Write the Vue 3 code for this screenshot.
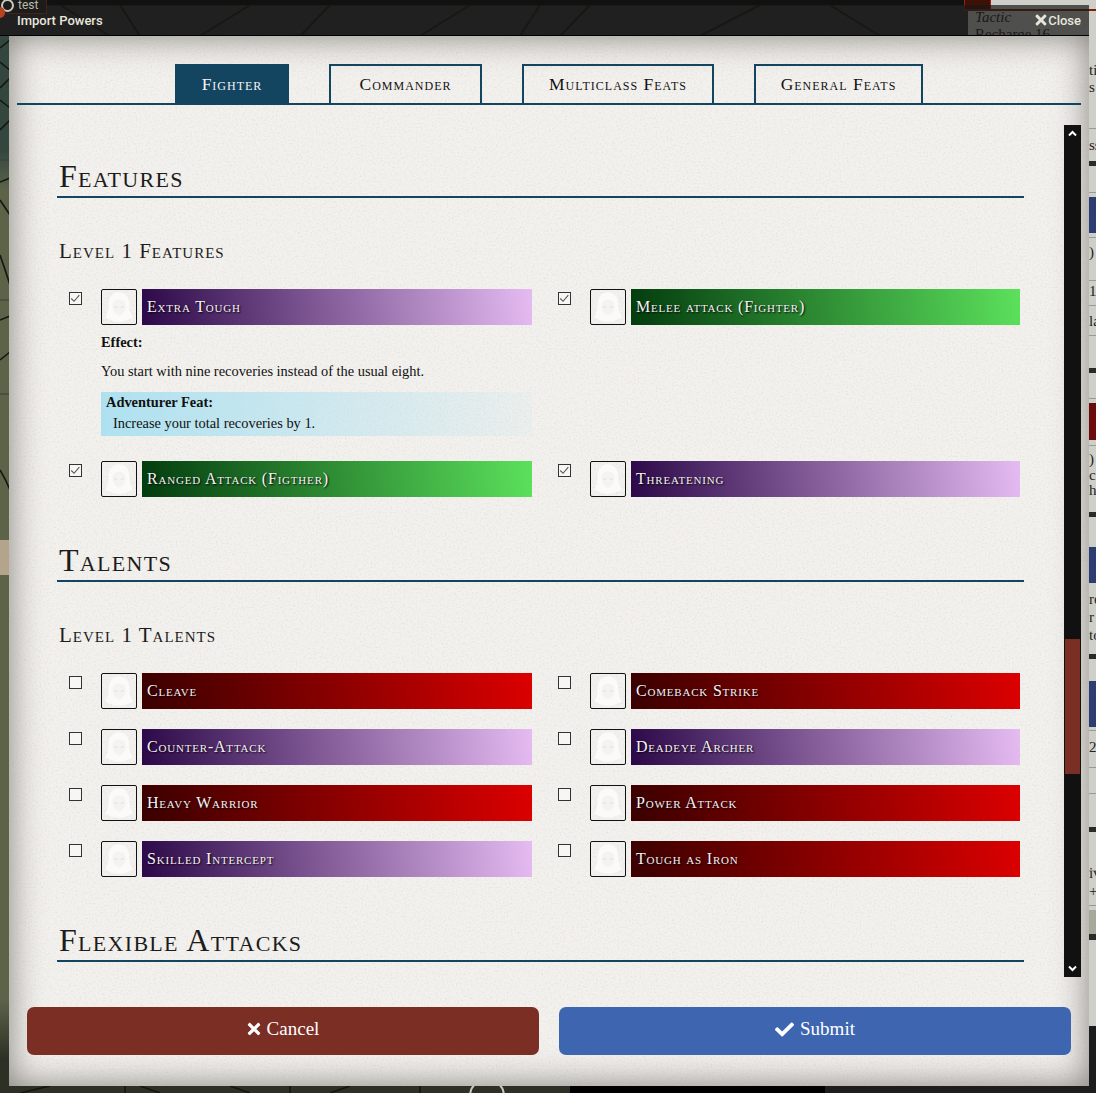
<template>
  <div class="desktop">
    <!-- whatever sits behind the dialog -->
    <div class="backdrop-top"></div>
    <svg class="map" width="1096" height="1093" viewBox="0 0 1096 1093">
      <g fill="none" stroke="#14170f" stroke-width="1.6">
        <path d="M0 48 L10 40 M0 62 L12 72 M0 88 L10 78 M0 100 L10 108 M0 130 L10 120 M0 182 L10 178 M0 200 L10 215 M0 255 Q6 272 10 285 M0 320 L10 316 M0 360 L10 352 M0 470 Q6 480 10 490" />
        <path d="M0 160 H10 M0 300 H10 M0 394 H10" stroke="#3b3f30" stroke-width="1" />
        <path d="M60 5 L110 36 M200 36 L250 5 M330 5 L300 36 M420 36 L470 5 M590 5 L560 36 M700 36 L760 5 M830 5 L880 36 M140 36 L120 5 M520 36 L540 5" stroke-width="2" />
        <path d="M20 1093 L50 1086 M140 1086 L160 1093 M230 1086 L250 1093 M330 1093 L350 1086 M125 1086 V1093 M290 1086 V1093 M420 1086 V1093" />
      </g>
    </svg>
    <div class="map-token"></div>
    <div class="test-chip"><span class="chip-ring"></span>test</div>
    <div class="red-dot"></div>
    <div class="backdrop-black"></div>
    <div class="backdrop-panel"></div>
    <div class="info-circle"></div>

    <div class="sheet">
      <div class="sheet-title"><i>Tactic</i><b>Recharge 16</b></div>
      <div
        v-for="(band, index) in sheetBands"
        :key="index"
        class="sheet-band"
        :style="{ top: band.top + 'px', height: band.height + 'px', background: band.color }"
      ></div>
      <span
        v-for="bit in sheetBits"
        :key="bit.top"
        class="sheet-bit"
        :style="{ top: bit.top + 'px' }"
      >{{ bit.text }}</span>
    </div>
    <div class="red-box"></div>
    <div class="red-line"></div>

    <div class="titlebar">
      <span class="title">Import Powers</span>
      <span class="close">
        <svg viewBox="0 0 352 512" width="12" height="16"><path :d="timesPath" fill="#e8e6dc" /></svg>
        Close
      </span>
    </div>

    <div class="dialog">
      <div class="paper">
        <svg width="1080" height="1050">
          <filter id="grain">
            <feTurbulence type="fractalNoise" baseFrequency="0.55" numOctaves="4" seed="7" />
            <feColorMatrix values="0 0 0 0 0.35  0 0 0 0 0.32  0 0 0 0 0.28  0 0 0 1.6 -0.75" />
          </filter>
          <rect width="1080" height="1050" filter="url(#grain)" opacity="0.22" />
        </svg>
      </div>

      <div class="tabs">
        <button
          v-for="(tab, index) in tabs"
          :key="tab"
          class="tab"
          :class="{ active: index === 0 }"
          :style="{ width: tabWidths[index] + 'px' }"
        >{{ tab }}</button>
      </div>

      <div class="scroll-area">
        <div class="content">
          <section v-for="section in sections" :key="section.title">
            <h2>{{ section.title }}</h2>
            <template v-if="section.subtitle">
              <h3>{{ section.subtitle }}</h3>
              <div class="power-grid">
                <div v-for="power in section.powers" :key="power.name" class="power">
                  <div class="power-row">
                    <span class="check">
                      <svg v-if="power.checked" viewBox="0 0 13 13" width="11" height="11">
                        <path d="M1.5 6.5 L4.8 9.8 L11 2.6" fill="none" stroke="#555" stroke-width="1.3" />
                      </svg>
                    </span>
                    <span class="portrait">
                      <svg viewBox="0 0 36 36" width="34" height="34">
                        <path d="M18 2.5 C10 2.5 6.5 10 7 17 C7.3 22 5 26 3.5 29 C9 32 13 33.5 18 33.5 C23 33.5 27 32 32.5 29 C31 26 28.7 22 29 17 C29.5 10 26 2.5 18 2.5 Z" fill="#fbfaf9" />
                        <path d="M18 10 C13 10 10.5 14 11 18 C11.5 23 15 27 18 27 C21 27 24.5 23 25 18 C25.5 14 23 10 18 10 Z" fill="#f4f3f0" />
                        <path d="M13 17.5 L16 18.5 M23 17.5 L20 18.5" stroke="#dedcd8" stroke-width="1" />
                      </svg>
                    </span>
                    <span class="power-bar" :class="power.kind">{{ power.name }}</span>
                  </div>
                  <div v-if="power.effect" class="details">
                    <div class="effect-label">Effect:</div>
                    <p class="effect">{{ power.effect }}</p>
                    <div class="feat">
                      <div class="feat-title">{{ power.featTitle }}</div>
                      <div class="feat-text">{{ power.featText }}</div>
                    </div>
                  </div>
                </div>
              </div>
            </template>
          </section>
        </div>

        <div class="scrollbar">
          <span class="scroll-btn">
            <svg viewBox="0 0 9 7" width="9" height="7"><path d="M1 5.5 L4.5 2 L8 5.5" fill="none" stroke="#fff" stroke-width="2" /></svg>
          </span>
          <div class="thumb"></div>
          <span class="scroll-btn bottom">
            <svg viewBox="0 0 9 7" width="9" height="7"><path d="M1 1.5 L4.5 5 L8 1.5" fill="none" stroke="#fff" stroke-width="2" /></svg>
          </span>
        </div>
      </div>

      <div class="actions">
        <button class="action cancel">
          <svg viewBox="0 0 352 512" width="14" height="18"><path :d="timesPath" fill="#fff" /></svg>
          <span>Cancel</span>
        </button>
        <button class="action submit">
          <svg viewBox="0 0 512 512" width="19" height="19"><path d="M173.9 439.4l-166.4-166.4c-10-10-10-26.2 0-36.2l36.2-36.2c10-10 26.2-10 36.2 0L192 312.7 432.1 72.6c10-10 26.2-10 36.2 0l36.2 36.2c10 10 10 26.2 0 36.2l-294.4 294.4c-10 10-26.2 10-36.2 0z" fill="#fff" /></svg>
          <span>Submit</span>
        </button>
      </div>
    </div>
  </div>
</template>

<script setup>
const timesPath = 'M242.7 256l100.1-100.1c12.3-12.3 12.3-32.2 0-44.5l-22.2-22.2c-12.3-12.3-32.2-12.3-44.5 0L176 189.3 75.9 89.2c-12.3-12.3-32.2-12.3-44.5 0L9.2 111.5c-12.3 12.3-12.3 32.2 0 44.5L109.3 256 9.2 356.1c-12.3 12.3-12.3 32.2 0 44.5l22.2 22.2c12.3 12.3 32.2 12.3 44.5 0L176 322.7l100.1 100.1c12.3 12.3 32.2 12.3 44.5 0l22.2-22.2c12.3-12.3 12.3-32.2 0-44.5L242.7 256z'

const tabs = ['Fighter', 'Commander', 'Multiclass Feats', 'General Feats']
const tabWidths = [114, 153, 192, 169]

const sections = [
  {
    title: 'Features',
    subtitle: 'Level 1 Features',
    powers: [
      {
        name: 'Extra Tough',
        kind: 'purple',
        checked: true,
        effect: 'You start with nine recoveries instead of the usual eight.',
        featTitle: 'Adventurer Feat:',
        featText: 'Increase your total recoveries by 1.'
      },
      { name: 'Melee attack (Fighter)', kind: 'green', checked: true },
      { name: 'Ranged Attack (Figther)', kind: 'green', checked: true },
      { name: 'Threatening', kind: 'purple', checked: true }
    ]
  },
  {
    title: 'Talents',
    subtitle: 'Level 1 Talents',
    powers: [
      { name: 'Cleave', kind: 'red' },
      { name: 'Comeback Strike', kind: 'red' },
      { name: 'Counter-Attack', kind: 'purple' },
      { name: 'Deadeye Archer', kind: 'purple' },
      { name: 'Heavy Warrior', kind: 'red' },
      { name: 'Power Attack', kind: 'red' },
      { name: 'Skilled Intercept', kind: 'purple' },
      { name: 'Tough as Iron', kind: 'red' }
    ]
  },
  { title: 'Flexible Attacks' }
]

// strips of the character sheet that show to the right of the dialog
const sheetBands = [
  { top: 128, height: 1, color: '#9a9a96' },
  { top: 161, height: 5, color: '#2a2a28' },
  { top: 192, height: 1, color: '#9a9a96' },
  { top: 197, height: 36, color: '#2d3d72' },
  { top: 237, height: 1, color: '#9a9a96' },
  { top: 280, height: 1, color: '#9a9a96' },
  { top: 305, height: 1, color: '#9a9a96' },
  { top: 335, height: 1, color: '#9a9a96' },
  { top: 368, height: 5, color: '#2a2a28' },
  { top: 398, height: 1, color: '#9a9a96' },
  { top: 403, height: 37, color: '#6b0c0c' },
  { top: 445, height: 1, color: '#9a9a96' },
  { top: 512, height: 5, color: '#2a2a28' },
  { top: 547, height: 36, color: '#2d3d72' },
  { top: 654, height: 5, color: '#2a2a28' },
  { top: 681, height: 46, color: '#2d3d72' },
  { top: 730, height: 1, color: '#9a9a96' },
  { top: 767, height: 1, color: '#9a9a96' },
  { top: 793, height: 1, color: '#9a9a96' },
  { top: 827, height: 5, color: '#2a2a28' },
  { top: 870, height: 1, color: '#9a9a96' },
  { top: 905, height: 1, color: '#9a9a96' },
  { top: 910, height: 24, color: '#a7a89c' },
  { top: 934, height: 6, color: '#2a2a28' },
  { top: 1026, height: 60, color: '#1c1c1c' }
]

const sheetBits = [
  { top: 63, text: 'ti' },
  { top: 80, text: 's' },
  { top: 138, text: 'ss' },
  { top: 245, text: ')' },
  { top: 284, text: '1' },
  { top: 314, text: 'la' },
  { top: 452, text: ')' },
  { top: 468, text: 'ce' },
  { top: 483, text: 'h' },
  { top: 592, text: 're' },
  { top: 610, text: 'r' },
  { top: 628, text: 'to' },
  { top: 740, text: '20' },
  { top: 866, text: 'iv' },
  { top: 884, text: '+' }
]
</script>

<style>
html,
body {
  margin: 0;
  background: #000;
}
</style>

<style scoped>
.desktop {
  position: relative;
  width: 1096px;
  height: 1093px;
  overflow: hidden;
  background: linear-gradient(180deg, #33473f 0, #33473f 150px, #5c6349 190px, #5c6349 1000px, #2c3025 1060px);
  font-family: "Liberation Serif", serif;
}

.map {
  position: absolute;
  top: 0;
  left: 0;
}

.map-token {
  position: absolute;
  top: 540px;
  left: 0;
  width: 10px;
  height: 35px;
  background: #b5a48c;
}

.backdrop-top {
  position: absolute;
  top: 0;
  left: 0;
  width: 1096px;
  height: 36px;
  background: linear-gradient(180deg, #0f120f 0, #0f120f 5px, #333 6px);
}

.backdrop-black {
  position: absolute;
  left: 570px;
  top: 1080px;
  width: 255px;
  height: 13px;
  background: #000;
}

.backdrop-panel {
  position: absolute;
  left: 825px;
  top: 1080px;
  width: 271px;
  height: 13px;
  background: #1d1d1d;
}

.info-circle {
  position: absolute;
  left: 469px;
  top: 1078px;
  width: 32px;
  height: 32px;
  border: 2px solid #c9c9c2;
  border-radius: 50%;
}

.test-chip {
  position: absolute;
  top: -4px;
  left: -6px;
  z-index: 3;
  display: flex;
  align-items: center;
  gap: 4px;
  width: 53px;
  height: 18px;
  box-sizing: border-box;
  padding-left: 6px;
  background: #1c1c1a;
  border: 1px solid #4a2018;
  color: #b9b9ae;
  font: 12px "Roboto", sans-serif;
}

.chip-ring {
  width: 9px;
  height: 9px;
  border: 2px solid #c9c9c2;
  border-radius: 50%;
}

.red-dot {
  position: absolute;
  top: 7px;
  left: -6px;
  z-index: 3;
  width: 11px;
  height: 11px;
  border-radius: 50%;
  background: #b8431f;
}

.sheet {
  position: absolute;
  top: 0;
  left: 968px;
  width: 128px;
  height: 1086px;
  overflow: hidden;
  background: #cfcfca;
}

.sheet-title {
  padding: 9px 0 0 7px;
  font-size: 15px;
  line-height: 16px;
  color: #222;
}

.sheet-title b {
  display: block;
  margin-top: 1px;
  font-weight: normal;
}

.sheet-band,
.sheet-bit {
  position: absolute;
  left: 0;
  width: 128px;
}

.sheet-bit {
  left: 121px;
  color: #222;
  font-size: 15px;
  line-height: 15px;
}

.red-box {
  position: absolute;
  top: 0;
  left: 964px;
  z-index: 1;
  box-sizing: border-box;
  width: 27px;
  height: 10px;
  background: #3c1206;
  border-left: 1px solid #b01808;
  border-right: 1px solid #b01808;
}

.red-line {
  position: absolute;
  top: 9px;
  left: 964px;
  z-index: 1;
  width: 132px;
  height: 2px;
  background: #7d2208;
}

.titlebar {
  position: absolute;
  top: 5px;
  left: 0;
  z-index: 2;
  display: flex;
  justify-content: space-between;
  align-items: center;
  box-sizing: border-box;
  width: 1089px;
  height: 31px;
  padding: 0 8px 0 17px;
  background: rgba(24, 24, 24, 0.7);
  border-bottom: 1px solid #000;
  color: #e8e6dc;
  font: 500 13px "Roboto", sans-serif;
}

.close {
  display: flex;
  align-items: center;
  gap: 1px;
}

.dialog {
  position: absolute;
  top: 36px;
  left: 9px;
  z-index: 4;
  display: flex;
  flex-direction: column;
  box-sizing: border-box;
  width: 1080px;
  height: 1050px;
  padding: 28px 8px 31px;
  background: #f3f1ee;
}

.paper {
  position: absolute;
  top: 0;
  left: 0;
  width: 1080px;
  height: 1050px;
  box-shadow: inset 0 0 34px rgba(50, 46, 40, 0.6);
}

.paper svg {
  display: block;
}

.tabs,
.scroll-area,
.actions {
  position: relative;
}

.tabs {
  display: flex;
  justify-content: center;
  gap: 40px;
  height: 41px;
  box-sizing: border-box;
  border-bottom: 2px solid #134560;
}

.tab {
  height: 41px;
  box-sizing: border-box;
  padding: 0;
  background: transparent;
  border: 2px solid #134560;
  color: #111;
  font-family: "Liberation Serif", serif;
  font-variant: small-caps;
  font-size: 17.5px;
  letter-spacing: 1px;
}

.tab.active {
  background: #134560;
  color: #f4f4f4;
}

.scroll-area {
  display: flex;
  height: 852px;
  margin-top: 20px;
}

.content {
  flex: 1;
  overflow: hidden;
  padding: 30px 40px 0;
}

section + section {
  margin-top: 42px;
}

h2 {
  margin: 0;
  box-sizing: border-box;
  height: 43px;
  padding: 2px 0 0 2px;
  border-bottom: 2px solid #134560;
  color: #1c1c1c;
  font-size: 32px;
  font-weight: normal;
  font-variant: small-caps;
  line-height: 38px;
  letter-spacing: 1.3px;
}

h3 {
  margin: 41px 0 26px;
  padding-left: 2px;
  color: #1c1c1c;
  font-size: 21px;
  font-weight: normal;
  font-variant: small-caps;
  line-height: 24px;
  letter-spacing: 1px;
}

.power-grid {
  display: grid;
  grid-template-columns: 475px 474px;
  column-gap: 14px;
  row-gap: 20px;
  align-items: start;
}

.power-row {
  display: flex;
  align-items: flex-start;
}

.check {
  display: flex;
  align-items: center;
  justify-content: center;
  box-sizing: border-box;
  width: 13px;
  height: 13px;
  margin: 3px 19px 0 12px;
  background: #f7f6f4;
  border: 1px solid #333;
}

.portrait {
  display: block;
  box-sizing: border-box;
  width: 36px;
  height: 36px;
  margin-right: 5px;
  border: 1px solid #111;
  border-radius: 2px;
  overflow: hidden;
}

.portrait svg {
  display: block;
}

.power-bar {
  flex: 1;
  height: 36px;
  padding-left: 5px;
  color: #f5f2f5;
  font-size: 16px;
  font-variant: small-caps;
  line-height: 36px;
  letter-spacing: 0.8px;
  text-shadow: 1px 1px 2px #000;
}

.purple {
  background: linear-gradient(82deg, #2c0848, #e5bbf2);
}

.green {
  background: linear-gradient(82deg, #033c0e, #5ce15c);
}

.red {
  background: linear-gradient(82deg, #3a0000, #dc0000);
}

.details {
  margin: 9px 0 5px 44px;
  color: #111;
  font-size: 14.4px;
}

.effect-label {
  font-weight: bold;
  line-height: 16px;
}

.effect {
  margin: 13px 0;
  line-height: 16px;
}

.feat {
  height: 44px;
  box-sizing: border-box;
  padding: 1px 5px 0;
  background: linear-gradient(90deg, #aee1f0, rgba(174, 225, 240, 0.1));
}

.feat-title {
  font-weight: bold;
  line-height: 18px;
}

.feat-text {
  margin-top: 3px;
  padding-left: 7px;
  line-height: 19px;
}

.scrollbar {
  display: flex;
  flex-direction: column;
  width: 17px;
  background: #111;
}

.scroll-btn {
  display: flex;
  align-items: center;
  justify-content: center;
  height: 17px;
}

.scroll-btn.bottom {
  margin-top: auto;
}

.thumb {
  height: 135px;
  margin: 497px 1px 0;
  background: #7a2e24;
}

.actions {
  display: flex;
  gap: 20px;
  margin: 30px 10px 0;
}

.action {
  display: flex;
  flex: 1;
  align-items: center;
  justify-content: center;
  gap: 6px;
  height: 48px;
  padding: 0 0 4px;
  border: none;
  border-radius: 7px;
  color: #fff;
  font-family: "Liberation Serif", serif;
  font-size: 19px;
}

.cancel {
  background: #7a2e24;
}

.submit {
  background: #3e65b0;
}
</style>
